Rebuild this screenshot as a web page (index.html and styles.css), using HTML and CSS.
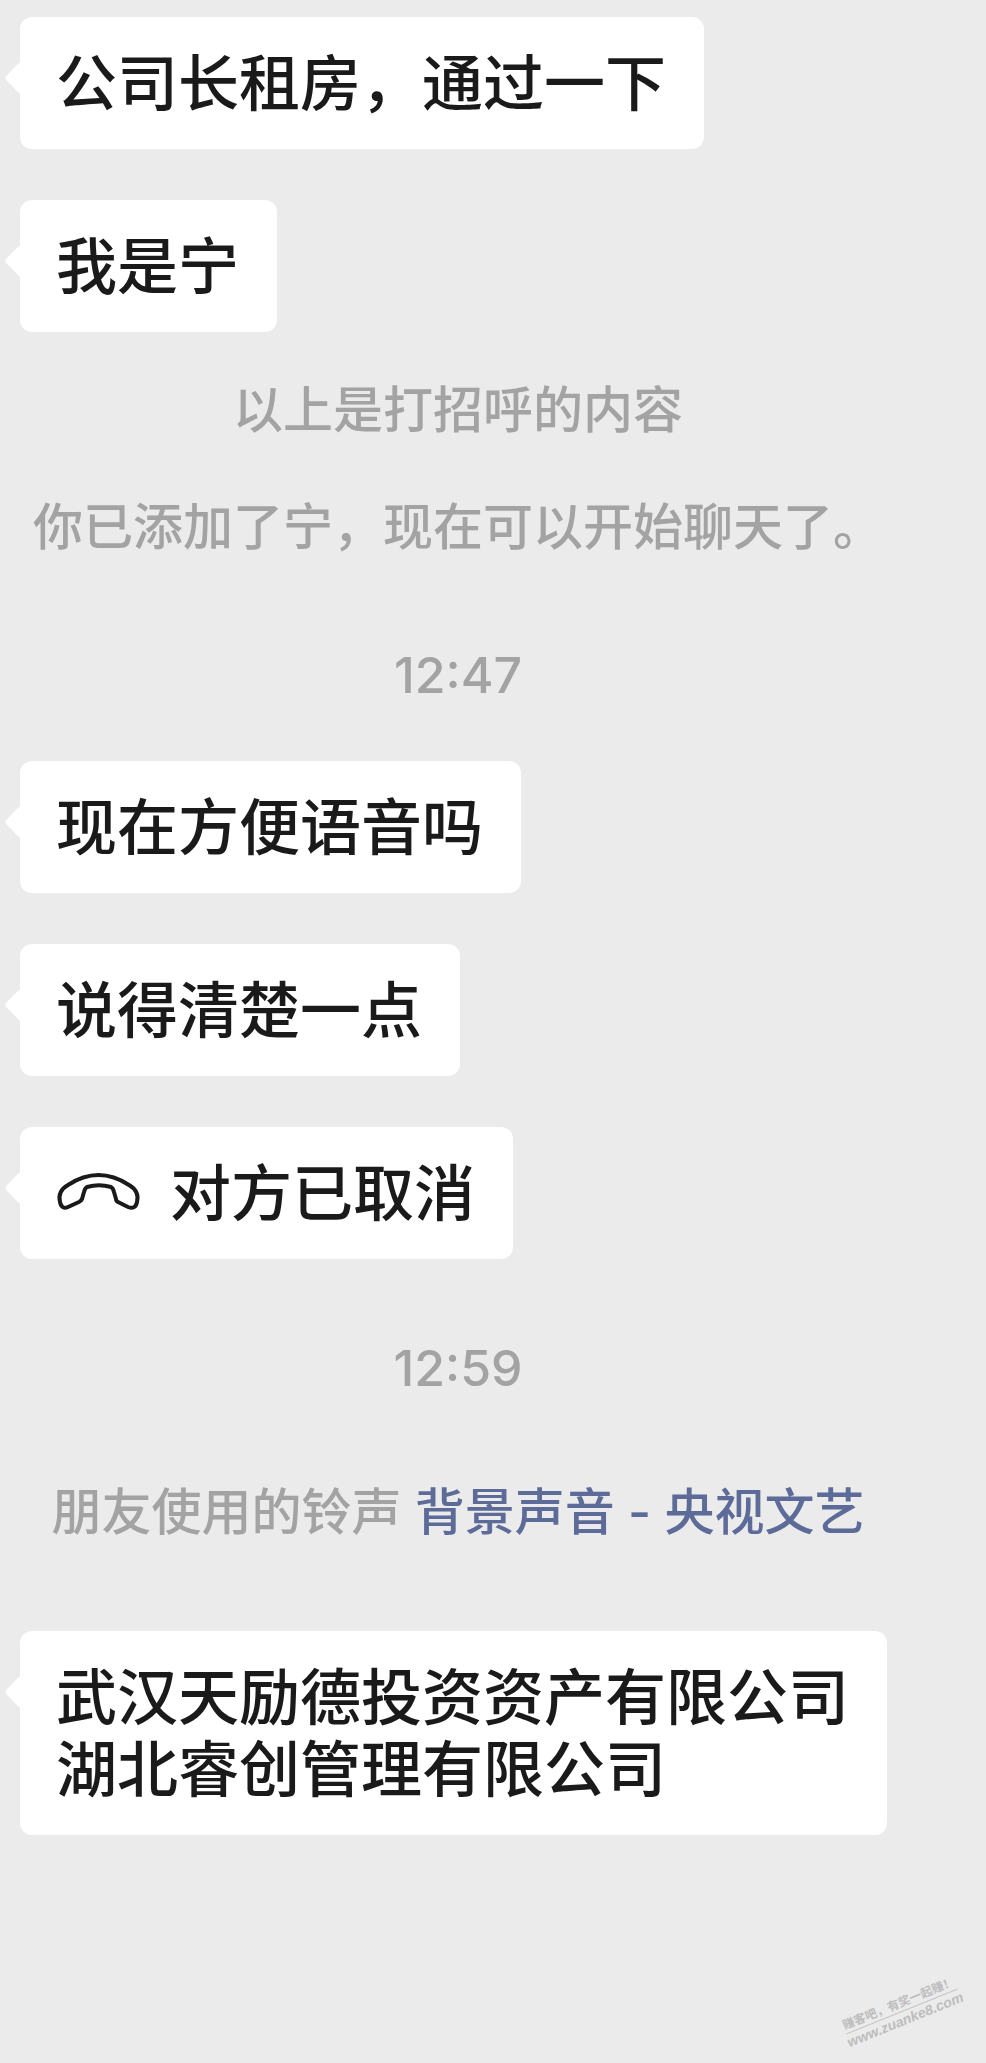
FILE: index.html
```html
<!DOCTYPE html>
<html lang="zh-CN">
<head>
<meta charset="utf-8">
<meta name="viewport" content="width=device-width, initial-scale=1">
<title>聊天</title>
<link rel="stylesheet" href="styles.css">
</head>
<body>
<main class="chat">
  <div class="group">
    <p class="bubble">公司长租房，通过一下</p>
    <p class="bubble">我是宁</p>
  </div>
  <div class="notices">
    <p class="notice">以上是打招呼的内容</p>
    <p class="notice">你已添加了宁，现在可以开始聊天了。</p>
  </div>
  <time class="time" datetime="12:47">12:47</time>
  <div class="group">
    <p class="bubble">现在方便语音吗</p>
    <p class="bubble">说得清楚一点</p>
    <p class="bubble call">
      <svg class="call-icon" viewBox="0 0 82 40" aria-hidden="true">
        <path d="M31 13C38 11 48 11 55 13Q57 14 58 18L60 25Q60 27 62 28L72 33C77 35 80 33 81 28C83 20 80 15 73 11C53 -2 32 -2 12 11C5 15 2 20 4 28C5 33 8 35 12 33L23 28Q25 27 26 25L28 18Q29 14 31 13Z"/>
      </svg>
      <span>对方已取消</span>
    </p>
  </div>
  <time class="time later" datetime="12:59">12:59</time>
  <p class="notice ringtone">朋友使用的铃声 <a class="link" href="#">背景声音 - 央视文艺</a></p>
  <div class="group">
    <p class="bubble">武汉天励德投资资产有限公司<br>湖北睿创管理有限公司</p>
  </div>
  <div class="watermark">
    <span class="slogan">赚客吧，有奖一起赚！</span>
    <span class="site">www.zuanke8.com</span>
  </div>
</main>
</body>
</html>
```

FILE: styles.css
```css
* {
  box-sizing: border-box;
}

body {
  margin: 0;
  background: #ebebeb;
  color: #1a1a1a;
  font-family: Inter, "Noto Sans CJK SC", sans-serif;
  font-weight: 500;
}

p {
  margin: 0;
}

.chat {
  position: relative;
  display: flex;
  flex-direction: column;
  min-height: 100vh;
  padding: 17px 70px 0 0;
  overflow: hidden;
}

.group {
  display: flex;
  flex-direction: column;
  align-items: flex-start;
  gap: 51px;
  padding-left: 20px;
}

.bubble {
  position: relative;
  padding: 31px 38px 29px 36px;
  border-radius: 12px;
  background: #fff;
  font-size: 61px;
  line-height: 72px;
}

.bubble::before {
  content: "";
  position: absolute;
  top: 49px;
  left: -11px;
  width: 24px;
  height: 24px;
  border-radius: 4px;
  background: #fff;
  transform: rotate(45deg);
}

.call {
  display: flex;
  align-items: center;
  gap: 32px;
}

.call-icon {
  width: 82px;
  height: 40px;
  overflow: visible;
  fill: none;
  stroke: #1a1a1a;
  stroke-width: 4;
  stroke-linejoin: round;
}

.notices {
  display: flex;
  flex-direction: column;
  gap: 57px;
  margin-top: 48px;
}

.notice,
.time {
  color: #a3a3a3;
  font-size: 50px;
  line-height: 60px;
  text-align: center;
}

.time {
  margin: 88px 0 56px;
}

.later {
  margin: 79px 0 84px;
}

.ringtone {
  margin-bottom: 89px;
}

.link {
  color: #5d6b98;
  text-decoration: none;
}

.watermark {
  position: absolute;
  right: 22px;
  bottom: 34px;
  display: flex;
  flex-direction: column;
  align-items: center;
  color: #bdbdbd;
  white-space: nowrap;
  transform: rotate(-22deg);
}

.slogan {
  border-bottom: 1px solid #c4c4c4;
  font-size: 12px;
  font-weight: 700;
  line-height: 17px;
}

.site {
  font-family: "Liberation Sans", sans-serif;
  font-size: 14px;
  font-style: italic;
  font-weight: 700;
  line-height: 17px;
}
```
